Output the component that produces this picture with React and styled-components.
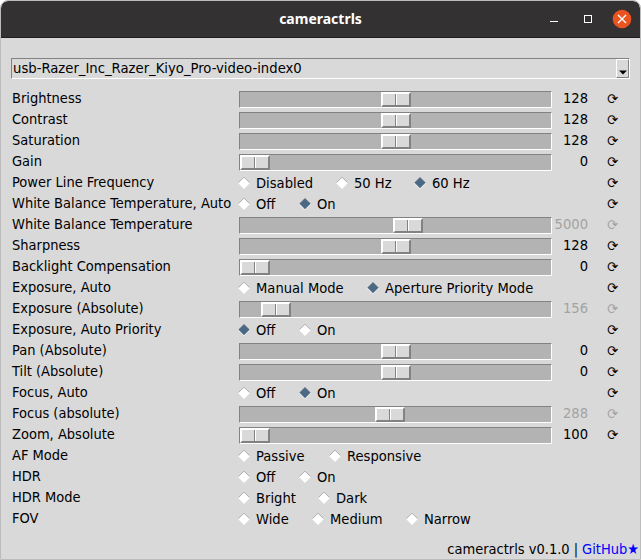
import React from "react";
import styled, { createGlobalStyle } from "styled-components";

const GlobalStyle = createGlobalStyle`
  *, *::before, *::after { box-sizing: border-box; }
  body { margin: 0; background: #fff; }
`;

const Window = styled.main`
  display: flex;
  flex-direction: column;
  width: 641px;
  height: 560px;
  overflow: hidden;
  border: 1px solid #bcbcbc;
  border-radius: 8px 8px 0 0;
  background: #d9d9d9;
  color: #000;
  font: 14.6px/21px "DejaVu Sans Condensed", "DejaVu Sans", sans-serif;
  white-space: nowrap;
`;

const TitleBar = styled.header`
  display: grid;
  grid-template-columns: 1fr auto 1fr;
  align-items: center;
  flex: none;
  height: 37px;
  background: #333132;
  border-bottom: 1px solid #1f1d1e;
  border-radius: 7px 7px 0 0;
`;

const Title = styled.h1`
  grid-column: 2;
  margin: 0;
  color: #fff;
  font: bold 14px/20px "Noto Sans", sans-serif;
`;

const WindowButtons = styled.div`
  display: flex;
  justify-content: flex-end;
  padding-right: 8px;
  svg { display: block; }
`;

const Content = styled.div`
  display: flex;
  flex-direction: column;
  flex: 1;
  padding: 20px 10px 0;
`;

const Combo = styled.div`
  display: flex;
  height: 21px;
  border: 1px solid;
  border-color: #828282 #fff #fff #828282;
`;

const ComboValue = styled.span`
  flex: 1;
  padding-left: 1px;
  font-size: 14.7px;
  line-height: 17px;
`;

const ArrowButton = styled.span`
  display: flex;
  align-items: flex-end;
  justify-content: center;
  width: 13px;
  padding-bottom: 2px;
  border: 1px solid;
  border-color: #fff #828282 #828282 #fff;
`;

const Controls = styled.div`
  margin-top: 9px;
`;

const Row = styled.div`
  display: grid;
  grid-template-columns: 227px 314px 35px 43px;
  height: 21px;
  padding-left: 1px;
  line-height: 19px;
`;

const Label = styled.span`
  font-size: 14.5px;
  line-height: 21px;
`;

const Track = styled.div`
  width: 313px;
  height: 17px;
  margin-top: 3px;
  border: 1px solid;
  border-color: #828282 #fff #fff #828282;
  background: #b3b3b3;
`;

const Thumb = styled.div`
  display: grid;
  grid-template-columns: 1fr 1fr;
  width: 30px;
  height: 15px;
  margin-left: ${(p) => p.$offset}px;
  border: 2px solid;
  border-color: #fff #828282 #828282 #fff;
  background: #d9d9d9;
`;

const ThumbHalf = styled.span`
  border-right: 1px solid #828282;
  & + & {
    border-right: 0;
    border-left: 1px solid #fff;
  }
`;

const Value = styled.span`
  text-align: right;
  color: ${(p) => (p.$disabled ? "#a3a3a3" : "#000")};
`;

const Reset = styled.span`
  padding-left: 19px;
  line-height: 22px;
  color: ${(p) => (p.$disabled ? "#a3a3a3" : "#000")};
`;

const Options = styled.div`
  display: flex;
  line-height: 21px;
`;

const Option = styled.span`
  display: flex;
  gap: 6px;
  width: ${(p) => (p.$width ? `${p.$width}px` : "auto")};
  svg { flex: none; margin: 5px 0 0 -1px; }
`;

const Footer = styled.footer`
  display: flex;
  justify-content: flex-end;
  gap: 4px;
  height: 21px;
  padding-right: 1px;
  font-size: 14.5px;
  line-height: 23px;
`;

const Link = styled.a`
  color: #00f;
`;

const onOff = [["Off", 61], ["On"]];
const rows = [
  { label: "Brightness", offset: 141, value: 128 },
  { label: "Contrast", offset: 141, value: 128 },
  { label: "Saturation", offset: 141, value: 128 },
  { label: "Gain", offset: 0, value: 0 },
  { label: "Power Line Frequency", options: [["Disabled", 98], ["50 Hz", 78], ["60 Hz"]], selected: 2, reset: true },
  { label: "White Balance Temperature, Auto", options: onOff, selected: 1, reset: true },
  { label: "White Balance Temperature", offset: 153, value: 5000, disabled: true },
  { label: "Sharpness", offset: 141, value: 128 },
  { label: "Backlight Compensation", offset: 0, value: 0 },
  { label: "Exposure, Auto", options: [["Manual Mode", 129], ["Aperture Priority Mode"]], selected: 1, reset: true },
  { label: "Exposure (Absolute)", offset: 21, value: 156, disabled: true },
  { label: "Exposure, Auto Priority", options: onOff, selected: 0, reset: true },
  { label: "Pan (Absolute)", offset: 141, value: 0 },
  { label: "Tilt (Absolute)", offset: 141, value: 0 },
  { label: "Focus, Auto", options: onOff, selected: 1, reset: true },
  { label: "Focus (absolute)", offset: 135, value: 288, disabled: true },
  { label: "Zoom, Absolute", offset: 0, value: 100 },
  { label: "AF Mode", options: [["Passive", 91], ["Responsive"]] },
  { label: "HDR", options: onOff },
  { label: "HDR Mode", options: [["Bright", 80], ["Dark"]] },
  { label: "FOV", options: [["Wide", 74], ["Medium", 94], ["Narrow"]] },
];

function Diamond({ selected }) {
  return (
    <svg width="12" height="12" viewBox="0 0 12 12">
      <path d="M6 0 12 6 6 12 0 6Z" fill="#fff" />
      {selected && <path d="M6 .3 11.5 5.8 6 11.3 .5 5.8Z" fill="#4a6984" />}
      <path d="M.5 5.5 6 .2 11.5 5.5" fill="none" stroke="#828282" strokeWidth=".6" />
    </svg>
  );
}

function ControlRow({ label, options, selected, offset, value, disabled, reset }) {
  return (
    <Row>
      <Label>{label}</Label>
      {options ? (
        <Options>
          {options.map(([text, width], i) => (
            <Option key={text} $width={width}>
              <Diamond selected={i === selected} />
              {text}
            </Option>
          ))}
        </Options>
      ) : (
        <Track>
          <Thumb $offset={offset}>
            <ThumbHalf />
            <ThumbHalf />
          </Thumb>
        </Track>
      )}
      <Value $disabled={disabled}>{value}</Value>
      {(reset || value !== undefined) && <Reset $disabled={disabled}>⟳</Reset>}
    </Row>
  );
}

export default function App() {
  return (
    <>
      <GlobalStyle />
      <Window>
        <TitleBar>
          <Title>cameractrls</Title>
          <WindowButtons>
            <svg width="84" height="20" viewBox="0 0 84 20">
              <path d="M2 12.5h8" stroke="#fff" />
              <rect x="36.5" y="6.5" width="7" height="7" fill="none" stroke="#fff" />
              <circle cx="74" cy="10" r="9.3" fill="#e95420" />
              <path d="m70 6 8 8m0-8-8 8" stroke="#fff" strokeWidth="1.4" />
            </svg>
          </WindowButtons>
        </TitleBar>
        <Content>
          <Combo>
            <ComboValue>usb-Razer_Inc_Razer_Kiyo_Pro-video-index0</ComboValue>
            <ArrowButton>
              <svg width="8" height="5" viewBox="0 0 8 5">
                <path d="M0 .5h8L4 4.5Z" />
              </svg>
            </ArrowButton>
          </Combo>
          <Controls>
            {rows.map((row) => (
              <ControlRow key={row.label} {...row} />
            ))}
          </Controls>
        </Content>
        <Footer>
          <span>cameractrls v0.1.0</span>
          <span>|</span>
          <Link>GitHub★</Link>
        </Footer>
      </Window>
    </>
  );
}
